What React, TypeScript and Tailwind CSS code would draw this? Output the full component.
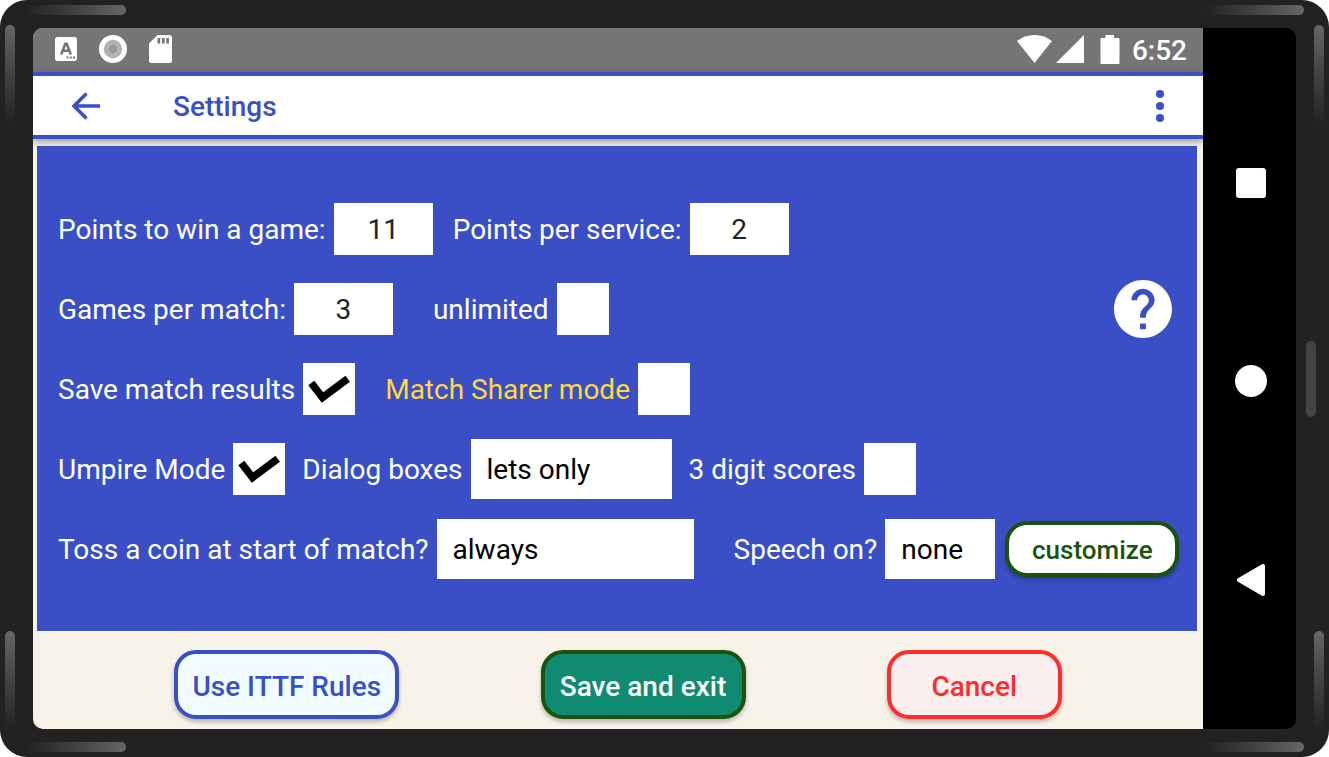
import React, { useId, useState } from "react";

function NumberField({ label, value }: { label: string; value: string }) {
  const id = useId();
  const [text, setText] = useState(value);
  return (
    <div className="flex items-center gap-2">
      <label htmlFor={id} className="pt-0.5">
        {label}
      </label>
      <input
        id={id}
        type="text"
        inputMode="numeric"
        value={text}
        onChange={(e) => setText(e.target.value)}
        className="h-[52px] w-[99px] bg-white pt-0.5 text-center text-[#222] outline-none"
      />
    </div>
  );
}

function CheckField({
  label,
  checked = false,
  highlight = false,
}: {
  label: string;
  checked?: boolean;
  highlight?: boolean;
}) {
  const id = useId();
  return (
    <div className="flex items-center gap-2">
      <label htmlFor={id} className={highlight ? "pt-0.5 text-[#ffd740]" : "pt-0.5"}>
        {label}
      </label>
      <span className="grid place-items-center">
        <input
          id={id}
          type="checkbox"
          defaultChecked={checked}
          className="peer col-start-1 row-start-1 size-[52px] appearance-none bg-white"
        />
        <svg
          viewBox="0 0 52 52"
          aria-hidden="true"
          className="pointer-events-none invisible col-start-1 row-start-1 size-[52px] peer-checked:visible"
        >
          <path d="M8.300 20L19.500 34.500L44.700 15.700" fill="none" stroke="#000" strokeWidth="7.600" />
        </svg>
      </span>
    </div>
  );
}

function SelectField({
  label,
  options,
  width,
}: {
  label: string;
  options: string[];
  width: string;
}) {
  const id = useId();
  return (
    <div className="flex items-center gap-2">
      <label htmlFor={id} className="pt-0.5">
        {label}
      </label>
      <select
        id={id}
        className={`h-[60px] appearance-none bg-white px-4 pt-0.5 text-black outline-none ${width}`}
      >
        {options.map((o) => (
          <option key={o}>{o}</option>
        ))}
      </select>
    </div>
  );
}

function StatusBar() {
  return (
    <div className="flex h-11 items-center justify-between bg-[#757575] pr-4 pb-0.5 pl-[22px]">
      <div className="flex items-center gap-[22px]">
        <svg viewBox="0 0 22 24" className="h-6 w-[22px]" aria-hidden="true">
          <rect width="22" height="24" rx="2.5" fill="#fff" />
          <path
            d="M6.200 17.500L10.300 6.800H11.700L15.800 17.500M8 13.800H14"
            fill="none"
            stroke="#757575"
            strokeWidth="2.6"
          />
          <path d="M11.500 19.500h2v2h-2zM14.800 19.500h2v2h-2zM18 19.500h2v2h-2z" fill="#757575" />
        </svg>
        <svg viewBox="0 0 28 28" className="size-7" aria-hidden="true">
          <circle cx="14" cy="14" r="14" fill="#fff" />
          <circle cx="14" cy="14" r="9.2" fill="#b3b3b3" />
          <circle cx="14" cy="14" r="4.3" fill="#999" />
        </svg>
        <svg viewBox="0 0 23 28" className="h-7 w-[23px]" aria-hidden="true">
          <path
            d="M8.500 0H20.500Q23 0 23 2.500V25.500Q23 28 20.500 28H2.500Q0 28 0 25.500V8.500Z"
            fill="#fff"
          />
          <path d="M8.500 3h2.700v5.500H8.500zM13 3h2.700v5.500H13zM17.300 3H20v5.500h-2.700z" fill="#757575" />
        </svg>
      </div>
      <div className="flex items-center text-white">
        <svg viewBox="0 0 35 28" className="h-7 w-[35px]" aria-hidden="true">
          <path d="M0 6Q7.500 0 17.500 0T35 6L17.500 28Z" fill="#fff" />
        </svg>
        <svg viewBox="0 0 28 28" className="ml-1 size-7" aria-hidden="true">
          <path d="M28 0V28H0Z" fill="#fff" />
        </svg>
        <svg viewBox="0 0 20 29" className="ml-4 h-[29px] w-5" aria-hidden="true">
          <path
            d="M5.500 0H14V3H18.500Q19.500 3 19.500 4V28Q19.500 29 18.500 29H1.500Q.5 29 .5 28V4Q.5 3 1.500 3H5.500Z"
            fill="#fff"
          />
        </svg>
        <span className="ml-3 pt-1 text-[28px] leading-8 font-medium">6:52</span>
      </div>
    </div>
  );
}

function Toolbar() {
  return (
    <header className="z-10 flex h-[67px] items-center border-y-4 border-[#3a4fc6] bg-white pr-[37px] pl-[38px] text-[#3a4fc6] shadow-[0_3px_7px_rgba(0,0,0,0.35)]">
      <button type="button" aria-label="Back" className="h-7 w-[30px]">
        <svg viewBox="0 0 30 28" className="h-7 w-[30px]" aria-hidden="true">
          <path
            d="M15.500 1.500L3 14L15.500 26.500M2.500 14H29"
            fill="none"
            stroke="currentColor"
            strokeWidth="3.500"
          />
        </svg>
      </button>
      <h1 className="ml-[72px] pt-0.5 text-[28px] leading-8 font-medium">Settings</h1>
      <button type="button" aria-label="More options" className="ml-auto h-8 w-3">
        <svg viewBox="0 0 12 32" className="h-8 w-3" fill="currentColor" aria-hidden="true">
          <circle cx="6" cy="4" r="4" />
          <circle cx="6" cy="16" r="4" />
          <circle cx="6" cy="28" r="4" />
        </svg>
      </button>
    </header>
  );
}

function SettingsPanel() {
  return (
    <main className="mt-[7px] mr-1.5 ml-1 flex grow flex-col justify-center gap-5 bg-[#3a4fc6] py-5 pr-5 pl-[21px] text-[28px] leading-8 whitespace-nowrap text-white">
      <div className="flex h-[60px] items-center gap-5">
        <NumberField label="Points to win a game:" value="11" />
        <NumberField label="Points per service:" value="2" />
      </div>
      <div className="flex h-[60px] items-center gap-10">
        <NumberField label="Games per match:" value="3" />
        <CheckField label="unlimited" />
        <button type="button" aria-label="Help" className="mr-[5px] ml-auto size-[58px]">
          <svg viewBox="2 2 20 20" className="size-[58px]" fill="#fff" aria-hidden="true">
            <path
              d="M12 2C6.480 2 2 6.480 2 12s4.480 10 10 10 10-4.480 10-10S17.520 2 12 2zm1 17h-2v-2h2v2zm2.070-7.750l-.9.920C13.450 12.900 13 13.500 13 15h-2v-.5c0-1.100.450-2.100 1.170-2.830l1.240-1.260c.370-.360.590-.860.590-1.410 0-1.100-.9-2-2-2s-2 .9-2 2H8c0-2.210 1.790-4 4-4s4 1.790 4 4c0 .880-.360 1.680-.930 2.250z"
            />
          </svg>
        </button>
      </div>
      <div className="flex h-[60px] items-center gap-[30px]">
        <CheckField label="Save match results" checked />
        <CheckField label="Match Sharer mode" highlight />
      </div>
      <div className="flex h-[60px] items-center gap-[17px]">
        <CheckField label="Umpire Mode" checked />
        <SelectField label="Dialog boxes" options={["lets only", "all", "none"]} width="w-[201px]" />
        <CheckField label="3 digit scores" />
      </div>
      <div className="flex h-[60px] items-center gap-10">
        <SelectField
          label="Toss a coin at start of match?"
          options={["always", "ask", "never"]}
          width="w-[257px]"
        />
        <div className="flex items-center gap-2.5">
          <SelectField label="Speech on?" options={["none", "all"]} width="w-[110px]" />
          <button
            type="button"
            className="h-14 w-[174px] shrink-0 rounded-[22px] border-4 border-[#1b530c] bg-white pt-0.5 text-[26px] font-medium text-[#1b530c] shadow-[0_3px_4px_rgba(0,0,0,0.25)]"
          >
            customize
          </button>
        </div>
      </div>
    </main>
  );
}

function Actions() {
  return (
    <footer className="flex h-[98px] items-center justify-evenly pt-2 text-[28px] leading-8 font-medium">
      <button
        type="button"
        className="h-[69px] w-[225px] rounded-[22px] border-4 border-[#3a4fc6] bg-[#f0fcff] pt-1.5 text-[#3a4fc6] shadow-[0_3px_4px_rgba(0,0,0,0.25)]"
      >
        Use ITTF Rules
      </button>
      <button
        type="button"
        className="h-[69px] w-[205px] rounded-[22px] border-4 border-[#1b530c] bg-[#118a72] pt-1.5 text-white shadow-[0_3px_4px_rgba(0,0,0,0.25)]"
      >
        Save and exit
      </button>
      <button
        type="button"
        className="h-[69px] w-[175px] rounded-[22px] border-4 border-[#ff2c2c] bg-[#faefee] pt-1.5 text-[#ff2c2c] shadow-[0_3px_4px_rgba(0,0,0,0.25)]"
      >
        Cancel
      </button>
    </footer>
  );
}

function NavigationBar() {
  return (
    <nav className="flex w-[93px] shrink-0 flex-col items-center justify-between bg-black pt-[140px] pb-[133px] pl-0.5">
      <button type="button" aria-label="Recent apps" className="size-[30px] rounded-[3px] bg-white" />
      <button type="button" aria-label="Home" className="size-8 rounded-full bg-white" />
      <button type="button" aria-label="Back" className="h-8 w-7">
        <svg viewBox="0 0 28 32" className="h-8 w-7" aria-hidden="true">
          <path
            d="M2 16L26 2V30Z"
            fill="#fff"
            stroke="#fff"
            strokeWidth="4"
            strokeLinejoin="round"
          />
        </svg>
      </button>
    </nav>
  );
}

function BezelHighlights() {
  return (
    <div aria-hidden="true">
      <i className="absolute top-[5px] left-[26px] h-2.5 w-[100px] rounded-full bg-linear-to-r from-[#222] to-[#666]" />
      <i className="absolute top-[25px] left-[5px] h-[100px] w-2.5 rounded-full bg-linear-to-b from-[#666] to-[#222]" />
      <i className="absolute bottom-[5px] left-[26px] h-2.5 w-[100px] rounded-full bg-linear-to-r from-[#222] to-[#666]" />
      <i className="absolute bottom-[26px] left-[5px] h-[100px] w-2.5 rounded-full bg-linear-to-b from-[#666] to-[#222]" />
      <i className="absolute top-[5px] right-[25px] h-2.5 w-[100px] rounded-full bg-linear-to-r from-[#222] to-[#666]" />
      <i className="absolute top-[25px] right-[5px] h-[100px] w-2.5 rounded-full bg-linear-to-b from-[#666] to-[#222]" />
      <i className="absolute right-[25px] bottom-[5px] h-2.5 w-[100px] rounded-full bg-linear-to-r from-[#222] to-[#666]" />
      <i className="absolute right-[5px] bottom-[26px] h-[100px] w-2.5 rounded-full bg-linear-to-b from-[#666] to-[#222]" />
      <i className="absolute top-1/2 right-[13px] h-[76px] w-2.5 -translate-y-1/2 rounded-full bg-[#444]" />
    </div>
  );
}

export default function App() {
  return (
    <div className="min-h-screen bg-white font-['Roboto',sans-serif]">
      <div className="relative flex min-h-screen rounded-[27px] bg-[#222] px-[33px] py-7">
        <BezelHighlights />
        <div className="flex grow overflow-hidden rounded-[10px]">
          <div className="flex min-w-0 grow flex-col bg-[#f7f3e8]">
            <StatusBar />
            <Toolbar />
            <SettingsPanel />
            <Actions />
          </div>
          <NavigationBar />
        </div>
      </div>
    </div>
  );
}
